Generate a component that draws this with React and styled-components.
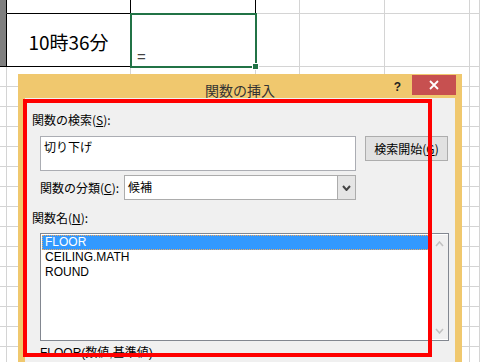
import React from 'react';
import styled, { createGlobalStyle } from 'styled-components';

const Global = createGlobalStyle`
  html, body { margin: 0; padding: 0; background: #fff; }
  body { font-family: "Noto Sans CJK JP", "Noto Sans", sans-serif; }
`;

const S = {
  Page: styled.div`
    position: relative;
    width: 480px;
    height: 362px;
    overflow: hidden;
    background: #fff;
  `,
  Sheet: styled.div`
    display: grid;
    grid-template-columns: 7px 124px 125px 44px 85px 85px 10px;
    grid-template-rows: 14px 53px repeat(15, 20px);
  `,
  Cell: styled.div`
    box-sizing: border-box;
    position: relative;
    background: ${p => p.$fill || '#fff'};
    border-right: 1px solid ${p => p.$right || '#d4d4d4'};
    border-bottom: 1px solid ${p => p.$bottom || '#d4d4d4'};
    display: flex;
    align-items: center;
    justify-content: center;
    font-family: "Noto Sans CJK JP", sans-serif;
    font-size: 19px;
    color: #000;
    padding-top: 3px;
  `,
  Selected: styled.div`
    box-sizing: border-box;
    position: relative;
    z-index: 1;
    margin: -1px -1px -1px -1px;
    border: 2px solid #217346;
    background: #fff;
    display: flex;
    align-items: flex-end;
    padding: 0 0 2px 5px;
    font-family: "Liberation Sans", sans-serif;
    font-size: 15px;
    line-height: 15px;
    color: #444;
    &::after {
      content: '';
      position: absolute;
      right: -4px;
      bottom: -4px;
      width: 5px;
      height: 5px;
      background: #217346;
      border: 1px solid #fff;
    }
  `,
  Dialog: styled.div`
    position: absolute;
    left: 18px;
    top: 74px;
    width: 444px;
    height: 310px;
    box-sizing: border-box;
    background: #f0c86e;
    padding: 0 7px 7px;
    display: flex;
    flex-direction: column;
  `,
  TitleBar: styled.div`
    height: 24px;
    flex: none;
    display: grid;
    grid-template-columns: 1fr auto 1fr;
    align-items: start;
  `,
  Title: styled.div`
    grid-column: 2;
    font-size: 14px;
    line-height: 16px;
    margin-top: 8px;
    color: #333;
  `,
  Controls: styled.div`
    grid-column: 3;
    justify-self: end;
    display: flex;
    align-items: flex-start;
    margin-right: -1px;
    padding-top: 1px;
  `,
  Help: styled.div`
    font-family: "Liberation Sans", sans-serif;
    font-weight: bold;
    font-size: 12px;
    line-height: 14px;
    color: #222;
    margin: 5px 11px 0 0;
  `,
  Close: styled.div`
    width: 44px;
    height: 20px;
    background: #c75050;
    display: flex;
    align-items: center;
    justify-content: center;
  `,
  Body: styled.div`
    flex: 1;
    background: #f0f0f0;
    padding: 14px 7px 0;
    font-size: 12px;
    line-height: 16px;
    color: #000;
  `,
  Label: styled.div`
    margin-top: ${p => p.$mt || 0}px;
  `,
  Row: styled.div`
    display: flex;
    align-items: flex-start;
    padding-left: 8px;
    margin-top: ${p => p.$mt || 0}px;
  `,
  TextBox: styled.div`
    box-sizing: border-box;
    width: 316px;
    height: 35px;
    background: #fff;
    border: 1px solid #abadb3;
    padding: 2px 3px;
  `,
  Button: styled.div`
    box-sizing: border-box;
    width: 83px;
    height: 25px;
    margin-left: 9px;
    background: #e1e1e1;
    border: 1px solid #adadad;
    display: flex;
    align-items: center;
    justify-content: center;
  `,
  InlineLabel: styled.div`
    width: 84px;
    align-self: center;
  `,
  Select: styled.div`
    box-sizing: border-box;
    width: 232px;
    height: 25px;
    background: #fff;
    border: 1px solid #acacac;
    display: flex;
    align-items: stretch;
  `,
  SelectText: styled.div`
    flex: 1;
    padding: 3px 3px 0;
  `,
  DropButton: styled.div`
    width: 17px;
    background: #e5e5e5;
    border-left: 1px solid #acacac;
    display: flex;
    align-items: center;
    justify-content: center;
  `,
  ListBox: styled.div`
    box-sizing: border-box;
    width: 409px;
    height: 108px;
    margin-left: 8px;
    margin-top: 7px;
    background: #fff;
    border: 1px solid #828790;
    padding: 1px 0 1px 1px;
    display: flex;
  `,
  Items: styled.div`
    flex: 1;
    font-family: "Liberation Sans", sans-serif;
    font-size: 12px;
  `,
  Item: styled.div`
    height: 15px;
    line-height: 15px;
    padding-left: 3px;
    color: ${p => (p.$active ? '#fff' : '#000')};
    background: ${p => (p.$active ? '#3399ff' : 'transparent')};
    outline: ${p => (p.$active ? '1px dotted #f0a860' : 'none')};
    outline-offset: -1px;
  `,
  Scroll: styled.div`
    width: 18px;
    background: #f0f0f0;
    display: flex;
    flex-direction: column;
    justify-content: space-between;
    align-items: center;
    padding: 6px 0 5px;
  `,
  Signature: styled.div`
    margin: 4px 0 0 8px;
    font-family: "Liberation Sans", "Noto Sans CJK JP", sans-serif;
    white-space: nowrap;
  `,
  Mark: styled.div`
    position: absolute;
    left: 23px;
    top: 99px;
    width: 409px;
    height: 258px;
    box-sizing: border-box;
    border: 4px solid #ff0000;
    pointer-events: none;
  `,
};

const Chevron = ({ up, color, w = 7, h = 4, sw = 1.6 }) => (
  <svg width={w + 2} height={h + 2} viewBox={`0 0 ${w + 2} ${h + 2}`}>
    <path
      d={up ? `M1 ${h + 1} L${w / 2 + 1} 1 L${w + 1} ${h + 1}` : `M1 1 L${w / 2 + 1} ${h + 1} L${w + 1} 1`}
      fill="none"
      stroke={color}
      strokeWidth={sw}
    />
  </svg>
);

const cellProps = (r, c) => {
  const black = '#000';
  if (r === 0) {
    if (c === 0) return { $fill: '#7f7f7f', $right: black, $bottom: '#7f7f7f' };
    if (c === 1 || c === 2) return { $right: black, $bottom: black };
  }
  if (r === 1) {
    if (c === 0) return { $fill: '#7f7f7f', $right: black, $bottom: black };
    if (c === 1) return { $right: black, $bottom: black };
  }
  return {};
};

const Sheet = () => {
  const cells = [];
  for (let r = 0; r < 17; r++) {
    for (let c = 0; c < 7; c++) {
      const key = `${r}-${c}`;
      if (r === 1 && c === 2) {
        cells.push(<S.Selected key={key}>=</S.Selected>);
      } else {
        cells.push(
          <S.Cell key={key} {...cellProps(r, c)}>
            {r === 1 && c === 1 ? '10時36分' : null}
          </S.Cell>
        );
      }
    }
  }
  return <S.Sheet>{cells}</S.Sheet>;
};

const functions = ['FLOOR', 'CEILING.MATH', 'ROUND'];

const App = () => {
  return (
    <S.Page>
      <Global />
      <Sheet />
      <S.Dialog>
        <S.TitleBar>
          <S.Title>関数の挿入</S.Title>
          <S.Controls>
            <S.Help>?</S.Help>
            <S.Close>
              <svg width="10" height="10" viewBox="0 0 10 10">
                <path d="M1 1 L9 9 M9 1 L1 9" stroke="#fff" strokeWidth="1.8" />
              </svg>
            </S.Close>
          </S.Controls>
        </S.TitleBar>
        <S.Body>
          <S.Label>
            関数の検索(<u>S</u>):
          </S.Label>
          <S.Row $mt={8}>
            <S.TextBox>切り下げ</S.TextBox>
            <S.Button>
              検索開始(<u>G</u>)
            </S.Button>
          </S.Row>
          <S.Row $mt={4}>
            <S.InlineLabel>
              関数の分類(<u>C</u>):
            </S.InlineLabel>
            <S.Select>
              <S.SelectText>候補</S.SelectText>
              <S.DropButton>
                <Chevron color="#444" w={7} h={4} sw={2} />
              </S.DropButton>
            </S.Select>
          </S.Row>
          <S.Label $mt={10}>
            関数名(<u>N</u>):
          </S.Label>
          <S.ListBox>
            <S.Items>
              {functions.map((f, i) => (
                <S.Item key={f} $active={i === 0}>
                  {f}
                </S.Item>
              ))}
            </S.Items>
            <S.Scroll>
              <Chevron up color="#c2c2c2" w={7} h={4} />
              <Chevron color="#c2c2c2" w={7} h={4} />
            </S.Scroll>
          </S.ListBox>
          <S.Signature>FLOOR(数値,基準値)</S.Signature>
        </S.Body>
      </S.Dialog>
      <S.Mark />
    </S.Page>
  );
};

export default App;
